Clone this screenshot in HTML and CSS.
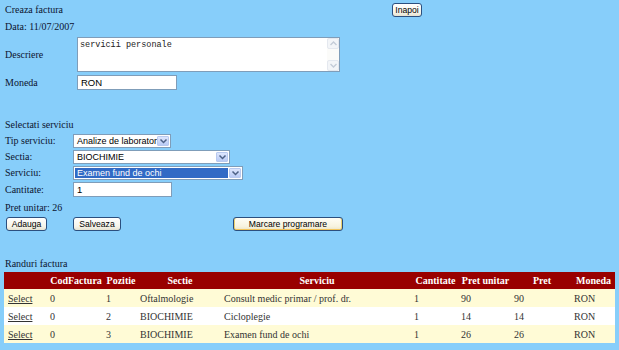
FILE: index.html
```html
<!DOCTYPE html>
<html lang="ro">
<head>
  <meta charset="UTF-8" />
  <title>Creaza factura</title>
  <link rel="stylesheet" href="styles.css">
</head>
<body>
  <div class="page">
    <div class="topbar">
      <span class="title">Creaza factura</span>
      <button class="btn btn-back">Inapoi</button>
    </div>
    <div class="line date">Data: 11/07/2007</div>

    <div class="form-grid first">
      <label>Descriere</label>
      <div class="textbox">
        <textarea>servicii personale</textarea>
        <div class="vscroll">
          <span class="sb-btn"><svg width="9" height="9" viewBox="0 0 9 9"><polyline points="1.5,6 4.5,3 7.5,6" /></svg></span>
          <span class="sb-track"></span>
          <span class="sb-btn"><svg width="9" height="9" viewBox="0 0 9 9"><polyline points="1.5,3 4.5,6 7.5,3" /></svg></span>
        </div>
      </div>
      <label>Moneda</label>
      <input class="text w-moneda" type="text" value="RON" />
    </div>

    <div class="section-title sel-title">Selectati serviciu</div>
    <div class="form-grid second">
      <label>Tip serviciu:</label>
      <div class="select w-tip">
        <span class="value">Analize de laborator</span>
        <span class="arrow"><svg width="9" height="8" viewBox="0 0 9 8"><polyline points="1.5,2.5 4.5,5.5 7.5,2.5" /></svg></span>
      </div>
      <label>Sectia:</label>
      <div class="select w-sectia">
        <span class="value">BIOCHIMIE</span>
        <span class="arrow"><svg width="9" height="8" viewBox="0 0 9 8"><polyline points="1.5,2.5 4.5,5.5 7.5,2.5" /></svg></span>
      </div>
      <label>Serviciu:</label>
      <div class="select w-serviciu">
        <span class="value selected">Examen fund de ochi</span>
        <span class="arrow"><svg width="9" height="8" viewBox="0 0 9 8"><polyline points="1.5,2.5 4.5,5.5 7.5,2.5" /></svg></span>
      </div>
      <label>Cantitate:</label>
      <input class="text w-cant" type="text" value="1" />
    </div>
    <div class="line pret">Pret unitar: 26</div>

    <div class="actions">
      <button class="btn btn-add">Adauga</button>
      <button class="btn btn-save">Salveaza</button>
      <button class="btn btn-mark">Marcare programare</button>
    </div>

    <div class="section-title rows-title">Randuri factura</div>
    <table class="grid">
      <colgroup>
        <col style="width:44px"><col style="width:56px"><col style="width:34px">
        <col style="width:84px"><col style="width:190px"><col style="width:47px">
        <col style="width:53px"><col style="width:60px"><col style="width:43px">
      </colgroup>
      <thead>
        <tr>
          <th></th><th>CodFactura</th><th>Pozitie</th><th>Sectie</th><th>Serviciu</th>
          <th>Cantitate</th><th>Pret unitar</th><th>Pret</th><th>Moneda</th>
        </tr>
      </thead>
      <tbody>
        <tr>
          <td><a href="#">Select</a></td><td>0</td><td>1</td><td>Oftalmologie</td>
          <td>Consult medic primar / prof. dr.</td><td>1</td><td>90</td><td>90</td><td>RON</td>
        </tr>
        <tr class="alt">
          <td><a href="#">Select</a></td><td>0</td><td>2</td><td>BIOCHIMIE</td>
          <td>Cicloplegie</td><td>1</td><td>14</td><td>14</td><td>RON</td>
        </tr>
        <tr>
          <td><a href="#">Select</a></td><td>0</td><td>3</td><td>BIOCHIMIE</td>
          <td>Examen fund de ochi</td><td>1</td><td>26</td><td>26</td><td>RON</td>
        </tr>
      </tbody>
    </table>
  </div>
</body>
</html>
```

FILE: styles.css
```css
:root {
  --page-bg: #87cefa;
  --text-color: #0d1430;
  --field-border: #7f9db9;
  --btn-border: #2b4f7e;
  --grid-head: #990000;
  --grid-row: #fffbd6;
  --grid-text: #333333;
}
body {
  margin: 0; background: var(--page-bg); color: var(--text-color);
  font-family: 'Liberation Serif', 'Times New Roman', serif; font-size: 10px;
}
.page { padding: 3px 4px 0 5px; }
.topbar { display: flex; align-items: center; height: 14px; }
.title { width: 387px; line-height: 12px; }
.line { line-height: 12px; }
.date { margin-top: 4px; }

.form-grid { display: grid; align-items: center; }
.form-grid label { line-height: 12px; }
.form-grid.first { grid-template-columns: 72px auto; row-gap: 3px; margin-top: 4px; justify-items: start; }
.form-grid.second { grid-template-columns: 68px auto; row-gap: 2px; margin-top: 3px; justify-items: start; }

.textbox {
  display: flex; width: 263px; height: 35px; box-sizing: border-box;
  border: 1px solid var(--field-border); background: #fff;
}
.textbox textarea {
  flex: 1; border: none; resize: none; outline: none; margin: 0; padding: 2px 2px;
  font-family: 'Liberation Mono', 'Courier New', monospace; font-size: 8.5px; color: #222;
  overflow: hidden; background: transparent;
}
.vscroll { width: 12px; display: flex; flex-direction: column; background: #fbfbf9; }
.sb-btn {
  height: 11px; box-sizing: border-box; border: 1px solid #e4e8ef; border-radius: 2px;
  background: #f3f5f8; display: flex; align-items: center; justify-content: center;
}
.sb-btn svg polyline { fill: none; stroke: #c4ccd8; stroke-width: 1.4; }
.sb-track { flex: 1; }

.text {
  box-sizing: border-box; height: 15px; margin: 0; padding: 0 3px;
  border: 1px solid var(--field-border); background: #fff;
  font-family: 'Liberation Sans', Arial, sans-serif; font-size: 9.5px; color: #000;
}
.w-moneda { width: 100px; }
.w-cant { width: 99px; }

.select {
  display: flex; align-items: center; box-sizing: border-box; height: 14px; padding: 1px;
  border: 1px solid var(--field-border); background: #fff;
  font-family: 'Liberation Sans', Arial, sans-serif; font-size: 9px; color: #000;
}
.select .value { flex: 1; line-height: 10px; padding: 0 1px 0 2px; white-space: nowrap; overflow: hidden; }
.select .value.selected { background: #316ac5; color: #fff; margin-right: 1px; }
.select .arrow {
  flex-shrink: 0; width: 12px; height: 10px; box-sizing: border-box; border: 1px solid #b8c9ef; border-radius: 1px;
  background: linear-gradient(#dde6fd, #b9cbf5); display: flex; align-items: center; justify-content: center;
}
.select .arrow svg polyline { fill: none; stroke: #4d6185; stroke-width: 1.5; }
.w-tip { width: 98px; }
.w-sectia { width: 157px; }
.w-serviciu { width: 170px; }

.pret { margin-top: 5px; }
.actions { display: flex; margin-top: 3px; }
.btn {
  box-sizing: border-box; height: 14px; padding: 0 4px; margin: 0;
  border: 1px solid var(--btn-border); border-radius: 3px;
  background: linear-gradient(#ffffff, #f6f4ea 70%, #e6e2d0);
  font-family: 'Liberation Sans', Arial, sans-serif; font-size: 8.6px; color: #000; line-height: 11px;
}
.btn-back { width: 30px; padding: 0; }
.btn-add { width: 41px; margin-left: 1px; }
.btn-save { width: 48px; margin-left: 26px; }
.btn-mark {
  width: 110px; margin-left: 112px; background: linear-gradient(#fffef6, #f7f3df 70%, #ebe5c8);
  box-shadow: inset 1px 0 0 #e9cf6e, inset -1px 0 0 #e9cf6e, inset 0 -1px 0 #f3c55a;
}

.section-title { line-height: 12px; }
.sel-title { margin-top: 29px; }
.rows-title { margin-top: 27px; }

.grid {
  margin: 2px 0 0 -1px; width: 611px; border-collapse: collapse; table-layout: fixed;
  color: var(--grid-text); font-size: 10px;
}
.grid th {
  background: var(--grid-head); color: #fff; font-weight: bold; height: 17px; padding: 0 2px;
  text-align: center; white-space: nowrap;
}
.grid td { height: 18px; padding: 0 2px; background: var(--grid-row); white-space: nowrap; }
.grid td:first-child { padding-left: 4px; }
.grid tr.alt td { background: #ffffff; }
.grid a { color: var(--grid-text); }
```
